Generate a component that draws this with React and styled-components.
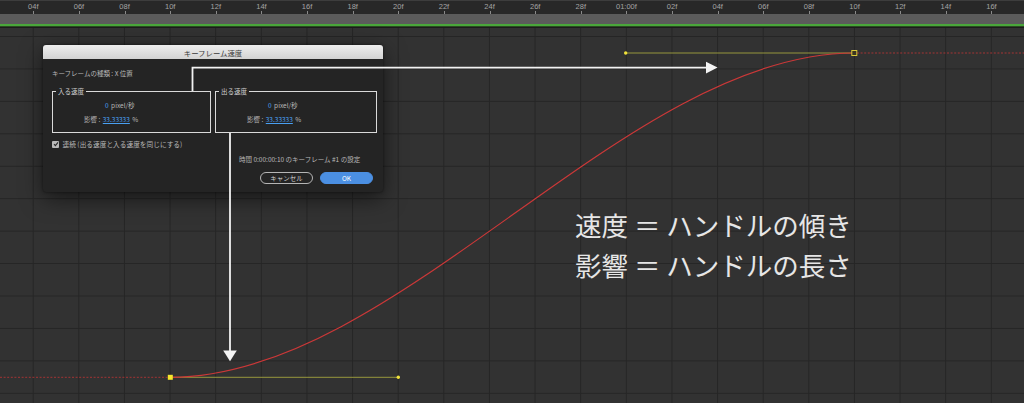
import React from "react";
import styled, { createGlobalStyle } from "styled-components";

const GlobalStyle = createGlobalStyle`
  * { box-sizing: border-box; }
  html, body { margin: 0; padding: 0; background: #323232; }
  body { font-family: "Noto Sans CJK JP", "Noto Sans", sans-serif; }
`;

const STEP = 45.63;
const labels = [
  "04f", "06f", "08f", "10f", "12f", "14f", "16f", "18f", "20f", "22f", "24f",
  "26f", "28f", "01:00f", "02f", "04f", "06f", "08f", "10f", "12f", "14f", "16f",
];

const Page = styled.div`
  width: 1024px;
  height: 403px;
  overflow: hidden;
  display: flex;
  flex-direction: column;
`;

const Ruler = styled.div`
  height: 14px;
  flex: none;
  display: flex;
  padding-left: 10.5px;
  background: #282828;
  border-top: 1px solid #3d3d3d;
`;

const Tick = styled.div`
  position: relative;
  flex: none;
  width: ${STEP}px;
  text-align: center;
  font-family: "Liberation Sans", Arial, sans-serif;
  font-size: 7.5px;
  line-height: 11px;
  color: #a4a4a4;

  &::after {
    content: "";
    position: absolute;
    left: 50%;
    bottom: 0;
    width: 1px;
    height: 3px;
    background: #8a8a8a;
  }
`;

const WorkBand = styled.div`
  height: 10px;
  flex: none;
  background: #5b5b5b;
`;

const GreenBar = styled.div`
  height: 3px;
  flex: none;
  background: #4aa63b;
  border-bottom: 1px solid #2a4a22;
`;

const Graph = styled.div`
  position: relative;
  flex: 1;
  background-color: #323232;
  background-image:
    linear-gradient(to right, #252525 1.4px, transparent 1.4px),
    linear-gradient(to bottom, #252525 1.4px, transparent 1.4px);
  background-size: ${STEP}px 32.45px;
  background-position: 32.7px 9px;
  box-shadow: inset 0 1px 0 #1c1c1c;
`;

const Drawing = styled.svg`
  position: absolute;
  left: 0;
  top: 0;
  width: 1024px;
  height: 376px;
  z-index: ${(p) => p.$layer};
  pointer-events: none;
`;

const Dialog = styled.div`
  position: absolute;
  left: 43px;
  top: 18px;
  width: 340px;
  height: 147px;
  display: flex;
  flex-direction: column;
  background: #242424;
  border-radius: 3px;
  box-shadow: 0 6px 22px rgba(0, 0, 0, 0.55), 0 0 3px rgba(0, 0, 0, 0.5);
  z-index: 2;
`;

const TitleBar = styled.div`
  height: 14px;
  flex: none;
  display: flex;
  align-items: center;
  justify-content: center;
  background: linear-gradient(#eeeeee, #d3d3d3);
  border-radius: 3px 3px 0 0;
  font-size: 7.4px;
  color: #3a3a3a;
`;

const Body = styled.div`
  display: flex;
  flex-direction: column;
  padding: 8px 6px 0 9px;
  font-size: 6.5px;
  color: #b8b8b8;
`;

const Line = styled.div`
  line-height: 12px;
  height: 12px;
  white-space: nowrap;
`;

const Boxes = styled.div`
  display: grid;
  grid-template-columns: 159px 162px;
  column-gap: 4px;
  margin-top: 12px;
`;

const SpeedBox = styled.div`
  position: relative;
  height: 42px;
  border: 1.5px solid #dadada;
  padding-top: 5.5px;
`;

const Legend = styled.span`
  position: absolute;
  left: 3px;
  top: -6px;
  padding: 0 2px;
  background: #242424;
  line-height: 10px;
  color: #d0d0d0;
`;

const ValueRow = styled.div`
  display: flex;
  gap: 2.5px;
  line-height: 14px;
  padding-left: ${(p) => p.$indent}px;
  white-space: nowrap;
`;

const Blue = styled.span`
  color: #4aa0f2;
  text-decoration: ${(p) => (p.$link ? "underline" : "none")};
  text-underline-offset: 1px;
`;

const CheckRow = styled.label`
  display: flex;
  align-items: center;
  gap: 3.5px;
  height: 12px;
  margin-top: 5px;
  white-space: nowrap;
  font-size: 6.7px;
`;

const CheckBox = styled.span`
  width: 7px;
  height: 7px;
  flex: none;
  border-radius: 1px;
  background: #b9b9b9;
  display: flex;
  align-items: center;
  justify-content: center;
`;

const TimeLine = styled(Line)`
  margin-top: 3px;
  padding-left: 187px;
`;

const Buttons = styled.div`
  display: flex;
  justify-content: flex-end;
  gap: 7px;
  margin-top: 7px;
  padding-right: 4px;
`;

const Button = styled.button`
  width: 53px;
  height: 12px;
  padding: 0;
  border-radius: 6px;
  font-family: inherit;
  font-size: 6.5px;
  line-height: 10px;
  border: 1px solid ${(p) => (p.$primary ? "#4b8fe2" : "#b5b5b5")};
  background: ${(p) => (p.$primary ? "#4b8fe2" : "transparent")};
  color: ${(p) => (p.$primary ? "#ffffff" : "#d0d0d0")};
`;

const Caption = styled.div`
  position: absolute;
  left: 575px;
  top: 178px;
  z-index: 4;
  font-size: 26.5px;
  line-height: 40px;
  color: #e6e6e6;
  white-space: nowrap;
`;

function Curve() {
  return (
    <Drawing $layer={1} viewBox="0 27 1024 376">
      <line x1="0" y1="377.3" x2="170" y2="377.3" stroke="#a23434" strokeWidth="1" strokeDasharray="2 1.6" />
      <line x1="857" y1="53" x2="1024" y2="53" stroke="#a23434" strokeWidth="1" strokeDasharray="2 1.6" />
      <line x1="170" y1="377.3" x2="398.3" y2="377.3" stroke="#96963c" strokeWidth="1" />
      <line x1="625.7" y1="53" x2="854" y2="53" stroke="#96963c" strokeWidth="1" />
      <path d="M170.3 377.3 C398.3 377.3 625.7 53 854.3 53" fill="none" stroke="#cc3838" strokeWidth="1.2" />
      <circle cx="398.3" cy="377.3" r="1.7" fill="#f1e23a" />
      <circle cx="625.7" cy="53" r="1.7" fill="#f1e23a" />
      <rect x="167.8" y="374.8" width="5" height="5" fill="#f6e62c" />
      <rect x="851.8" y="50.5" width="5" height="5" fill="#3a3622" stroke="#d9c83a" strokeWidth="1" />
    </Drawing>
  );
}

function Arrows() {
  return (
    <Drawing $layer={3} viewBox="0 27 1024 376">
      <path d="M192.5 91 V67.6 H707" fill="none" stroke="#f2f2f2" strokeWidth="1.8" />
      <polygon points="706,61.8 717.6,67.6 706,73.4" fill="#f4f4f4" />
      <path d="M230 133 V351" fill="none" stroke="#f2f2f2" strokeWidth="1.8" />
      <polygon points="223.2,350.5 236.8,350.5 230,361.3" fill="#f4f4f4" />
    </Drawing>
  );
}

function SpeedPanel({ title }) {
  return (
    <SpeedBox>
      <Legend>{title}</Legend>
      <ValueRow $indent={52}>
        <Blue>0</Blue>
        <span>pixel/秒</span>
      </ValueRow>
      <ValueRow $indent={31}>
        <span>影響 :</span>
        <Blue $link>33.33333</Blue>
        <span>%</span>
      </ValueRow>
    </SpeedBox>
  );
}

export default function App() {
  return (
    <Page>
      <GlobalStyle />
      <Ruler>
        {labels.map((l, i) => (
          <Tick key={i}>{l}</Tick>
        ))}
      </Ruler>
      <WorkBand />
      <GreenBar />
      <Graph>
        <Curve />
        <Dialog>
          <TitleBar>キーフレーム速度</TitleBar>
          <Body>
            <Line>キーフレームの種類 : X 位置</Line>
            <Boxes>
              <SpeedPanel title="入る速度" />
              <SpeedPanel title="出る速度" />
            </Boxes>
            <CheckRow>
              <CheckBox>
                <svg width="6" height="6" viewBox="0 0 6 6">
                  <path d="M1 3.2 L2.4 4.6 L5 1.4" fill="none" stroke="#2a2a2a" strokeWidth="1.1" />
                </svg>
              </CheckBox>
              <span>連続 (出る速度と入る速度を同じにする)</span>
            </CheckRow>
            <TimeLine>時間 0:00:00:10 のキーフレーム #1 の設定</TimeLine>
            <Buttons>
              <Button>キャンセル</Button>
              <Button $primary>OK</Button>
            </Buttons>
          </Body>
        </Dialog>
        <Arrows />
        <Caption>
          <div>速度 ＝ ハンドルの傾き</div>
          <div>影響 ＝ ハンドルの長さ</div>
        </Caption>
      </Graph>
    </Page>
  );
}
